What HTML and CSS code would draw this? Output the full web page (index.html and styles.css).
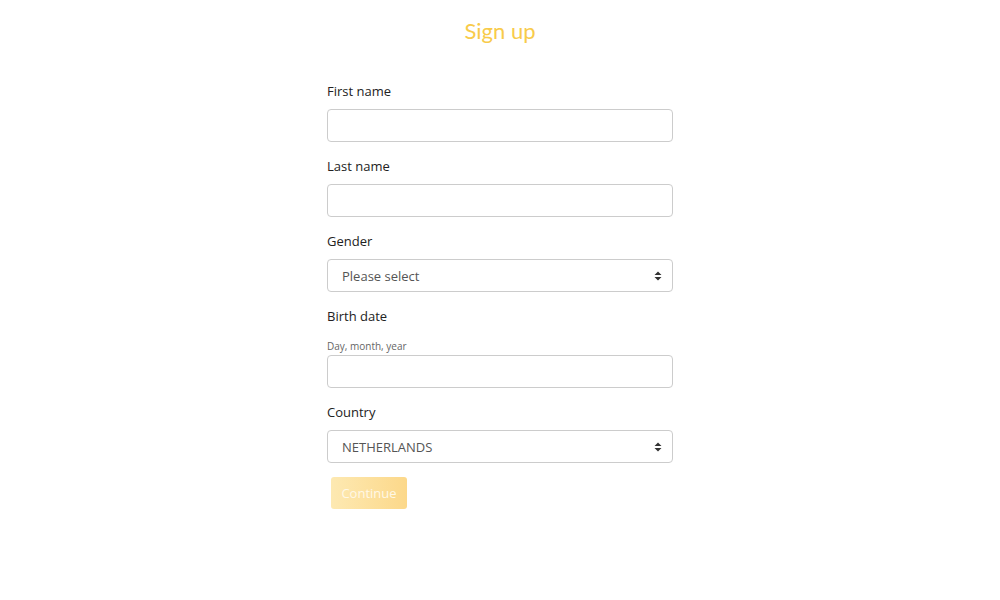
FILE: index.html
```html
<!DOCTYPE html>
<html lang="en">
<head>
<meta charset="utf-8">
<title>Sign up</title>
<link rel="stylesheet" href="styles.css">
</head>
<body>
<main class="page">
  <h1 class="title">Sign up</h1>
  <form class="form">
    <div class="group">
      <label class="label">First name</label>
      <div class="field"></div>
    </div>
    <div class="group">
      <label class="label">Last name</label>
      <div class="field"></div>
    </div>
    <div class="group">
      <label class="label">Gender</label>
      <div class="field select">
        <span class="value">Please select</span>
        <svg class="arrows" width="8" height="10" viewBox="0 0 8 10"><path d="M4 0.5 L7.5 4 L0.5 4 Z M0.5 6 L7.5 6 L4 9.5 Z" fill="#333"/></svg>
      </div>
    </div>
    <div class="group">
      <label class="label label-tight">Birth date</label>
      <div class="hint">Day, month, year</div>
      <div class="field"></div>
    </div>
    <div class="group">
      <label class="label">Country</label>
      <div class="field select">
        <span class="value">NETHERLANDS</span>
        <svg class="arrows" width="8" height="10" viewBox="0 0 8 10"><path d="M4 0.5 L7.5 4 L0.5 4 Z M0.5 6 L7.5 6 L4 9.5 Z" fill="#333"/></svg>
      </div>
    </div>
    <div class="actions">
      <button type="button" class="btn">Continue</button>
    </div>
  </form>
</main>
</body>
</html>
```

FILE: styles.css
```css
html, body {
  margin: 0;
  padding: 0;
  background: #fff;
}
body {
  font-family: "Open Sans", "Noto Sans", sans-serif;
  color: #222;
}
.page {
  width: 346px;
  margin: 0 auto;
}
.title {
  font-family: Lato, sans-serif;
  font-weight: 400;
  font-size: 22px;
  line-height: 28px;
  color: #f8cb4a;
  text-align: center;
  margin: 17px 0 36px;
}
.form {
  display: flex;
  flex-direction: column;
}
.group {
  display: flex;
  flex-direction: column;
  margin-bottom: 14px;
}
.label {
  font-size: 13px;
  line-height: 20px;
  color: #222;
  margin-bottom: 8px;
}
.label-tight {
  margin-bottom: 13px;
}
.hint {
  font-size: 10px;
  line-height: 14px;
  color: #666;
  margin-bottom: 2px;
}
.field {
  box-sizing: border-box;
  height: 33px;
  border: 1px solid #ccc;
  border-radius: 4px;
  background: #fff;
}
.select {
  display: flex;
  align-items: center;
  justify-content: space-between;
  padding: 0 10px 0 14px;
}
.value {
  font-size: 13px;
  color: #555;
}
.arrows {
  display: block;
}
.actions {
  display: flex;
  padding-left: 4px;
}
.btn {
  height: 32px;
  width: 76px;
  border: none;
  border-radius: 3px;
  background: linear-gradient(to right, #fde9b2, #fcd88a);
  color: #fff8e6;
  font-family: "Open Sans", sans-serif;
  font-size: 13px;
  padding: 0;
}
```
